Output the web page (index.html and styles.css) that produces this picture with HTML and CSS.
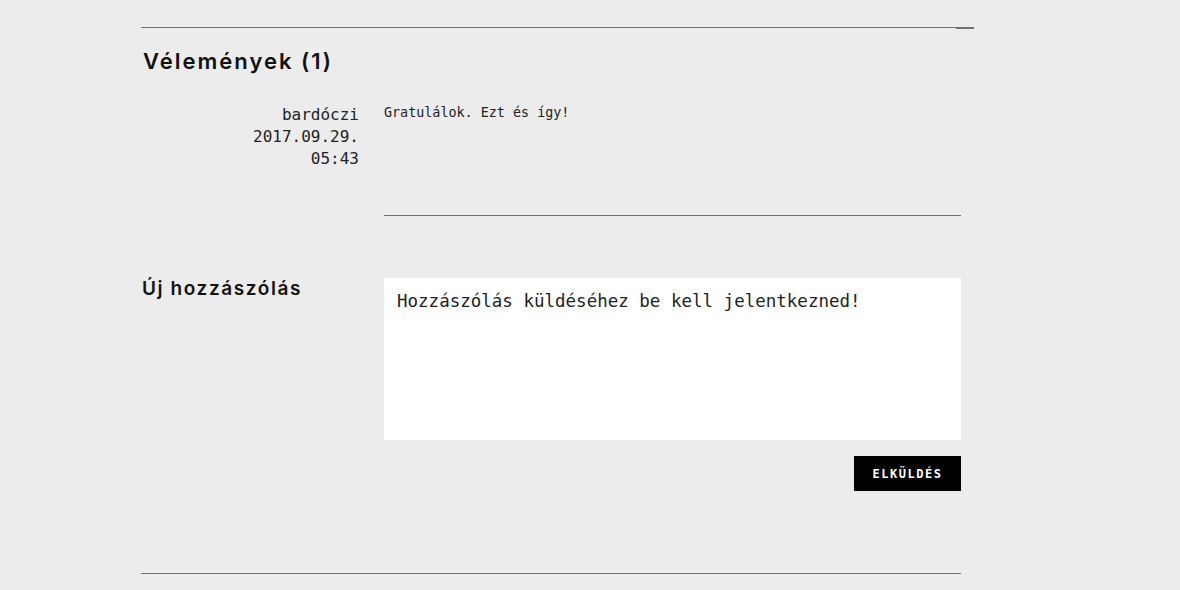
FILE: index.html
```html
<!DOCTYPE html>
<html lang="hu">
<head>
    <meta charset="UTF-8">
    <title>Vélemények</title>
    <link rel="stylesheet" href="styles.css">
</head>
<body>
    <div class="wrap">
        <div class="top-rule">
            <span class="line"></span>
            <span class="tab"></span>
        </div>

        <h2 class="section-title">Vélemények (1)</h2>

        <div class="comment">
            <div class="comment-meta">
                <div class="author">bardóczi</div>
                <div class="date">2017.09.29.<br>05:43</div>
            </div>
            <div class="comment-body">Gratulálok. Ezt és így!</div>
        </div>
        <div class="comment-rule"></div>

        <!-- New comment form -->
        <form class="new-comment">
            <h3 class="form-title">Új hozzászólás</h3>
            <div class="form-main">
                <textarea class="comment-input" placeholder="Hozzászólás küldéséhez be kell jelentkezned!" disabled></textarea>
                <div class="form-actions">
                    <button type="submit" class="btn">Elküldés</button>
                </div>
            </div>
        </form>

        <div class="bottom-rule"></div>
    </div>
</body>
</html>
```

FILE: styles.css
```css
:root {
    --bg: #ececec;
    --text: #111;
    --rule: #707070;
    --mono: 'DejaVu Sans Mono', 'Liberation Mono', monospace;
    --sans: 'Inter', 'Liberation Sans', sans-serif;
}

body {
    margin: 0;
    background: var(--bg);
    color: var(--text);
    font-family: var(--mono);
}

.wrap {
    width: 820px;
    margin-left: 141px;
}

.top-rule {
    display: flex;
    align-items: flex-start;
    width: 833px;
    padding-top: 27px;
}

.top-rule .line {
    flex: 1;
    height: 1px;
    background: var(--rule);
}

.top-rule .tab {
    width: 18px;
    height: 2px;
    background: var(--rule);
}

.section-title {
    margin: 17px 0 0 2px;
    font-family: var(--sans);
    font-size: 22px;
    font-weight: 600;
    line-height: 30px;
    letter-spacing: 2px;
}

.comment {
    display: grid;
    grid-template-columns: 218px 1fr;
    column-gap: 25px;
    margin-top: 28px;
}

.comment-meta {
    text-align: right;
    font-size: 16px;
    line-height: 22px;
    color: #222;
}

.comment-body {
    font-size: 13.4px;
    line-height: 18px;
    color: #222;
}

.comment-rule {
    margin: 45px 0 0 243px;
    height: 1px;
    background: var(--rule);
}

.new-comment {
    display: grid;
    grid-template-columns: 218px 1fr;
    column-gap: 25px;
    margin-top: 62px;
}

.form-title {
    margin: 0 0 0 1px;
    font-family: var(--sans);
    font-size: 19px;
    font-weight: 600;
    line-height: 22px;
    letter-spacing: 1.6px;
}

.comment-input {
    display: block;
    box-sizing: border-box;
    width: 100%;
    height: 162px;
    margin: 0;
    padding: 12px 13px;
    border: none;
    background: white;
    font-family: var(--mono);
    font-size: 17.5px;
    line-height: 22px;
    resize: none;
}

.comment-input::placeholder {
    color: #222;
    opacity: 1;
}

.form-actions {
    display: flex;
    justify-content: flex-end;
    margin-top: 16px;
}

.btn {
    width: 107px;
    height: 35px;
    padding: 0;
    border: none;
    background: #000;
    color: white;
    font-family: var(--mono);
    font-size: 12px;
    font-weight: 700;
    letter-spacing: 1.5px;
    text-transform: uppercase;
    cursor: pointer;
}

.bottom-rule {
    margin-top: 82px;
    height: 1px;
    background: var(--rule);
}
```
